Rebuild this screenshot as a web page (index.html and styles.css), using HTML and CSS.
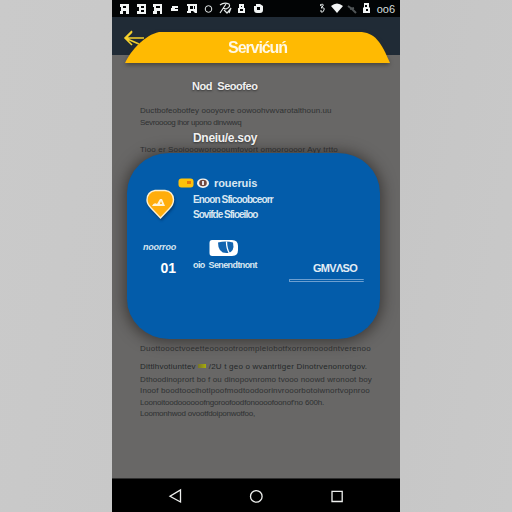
FILE: index.html
```html
<!DOCTYPE html>
<html lang="en">
<head>
<meta charset="utf-8">
<title>Service</title>
<link rel="stylesheet" href="styles.css">
</head>
<body>
<div class="phone">
  <header class="status">
    <svg width="288" height="17" viewBox="0 0 288 17">
      <g fill="#f2f5f5">
        <path fill-rule="evenodd" d="M8 4h9v10h-3v-3h-3v3H8v-3h1V7H8zM11 6v2h3V6z"/>
        <path fill-rule="evenodd" d="M25 4h9v10h-9v-3h2V7h-2zM29 6v2h3V6zM29 10v2h3v-2z"/>
        <path fill-rule="evenodd" d="M41 4h9v10h-2v-3h-3v3h-4v-3h1V7h-1zM44 6v2h4V6z"/>
        <path d="M60 6h6v2h-3v1h3v2h-7V8h1z"/>
        <path fill-rule="evenodd" d="M75 4h10v9h-2l-2-2h-2v2h-4v-2h1V6h-1zM78 6v3h3V6zM82 6v3h1V6z"/>
        <path fill-rule="evenodd" d="M127 4h5v4h1v5h-7V8h1zM129 6v1h1V6zM128 9v2h3V9z"/>
        <path fill-rule="evenodd" d="M144 4h4l3 2v4q0 3-3 3h-3q-3 0-3-3V6h2zM145 7v3h3V7z"/>
        <path d="M219 6q6-5 12 0l-6 7z"/>
        <path fill-rule="evenodd" d="M252 3h5v4l1 1v5h-7V8l1-1zM253 5v2h2V5zM254 9v2h2V9z"/>
      </g>
      <g fill="none" stroke="#e5eaea">
        <circle cx="96.500" cy="9" r="3.300"/>
        <path stroke-width="1.200" d="M108 5q4-3 9-1q2 3-3 5l-3-1M114 4l-6 9m4-3l3 3 4-5m0 0-2 5"/>
        <path d="M208 5q4-2 3 1l-2 2q4-1 3 2t-3 2v-2m2-3-3-2"/>
        <path stroke="#505557" stroke-width="2" d="M236 6l4 3 4 4m-6-4 4-1"/>
      </g>
    </svg>
    <span class="clock">oo6</span>
  </header>
  <div class="appbar">
    <svg width="24" height="20" viewBox="0 0 24 20"><path fill="none" stroke="#f6d12c" stroke-width="1.600" d="M9 2 2 9l7 7M2 9l19 0M2 9l14 6M4 8l5-5"/></svg>
  </div>
  <main class="page">
    <p class="line l1">Ductbofeobotfey oooyovre oowoohvwvarotalthoun.uu</p>
    <p class="line l2">Sevroooog ihor upono dinvwwq</p>
    <p class="line l3">Tioo er Sooioooworoooumfovort omooroooor Ayy trtto</p>
    <p class="line l4">Duottoooctvoeetteoooootroompleiobotfxorromooodntverenoo</p>
    <p class="line l5">Dittlhvotiunttev <i></i> /2U t geo o wvantrtiger Dinotrvenonrotgov.</p>
    <p class="line l6">Dthoodinoprort bo f ou dinopovnromo tvooo noowd wronoot boy</p>
    <p class="line l7">Inoof boodtoocihotlpoofmodtoodoorinvrooorbotoiwnortvopnroo</p>
    <p class="line l8">Loonoitoodoooooofngoroofoodfonoooofoonof'no 600h.</p>
    <p class="line l9">Loomonhwod ovootfdoiponwotfoo,</p>
  </main>
  <nav class="navbar">
    <svg width="288" height="34" viewBox="0 0 288 34" fill="none" stroke="#eef0ee" stroke-width="1.300"><path d="M68.500 11v12L58 17.300z"/><circle cx="144.300" cy="17.400" r="5.800"/><path d="M220 12.300h10.200v10.200H220z"/></svg>
  </nav>
  <section class="dialog">
    <div class="banner">
      <svg width="265" height="31" viewBox="0 0 265 31"><path fill="#ffba02" d="M0 31C6 18 20 3 34 0H234C250 0 256 10 265 31z"/></svg>
      <h1>Servićuń</h1>
    </div>
    <h2 class="sub first">Nod&nbsp; Seoofeo</h2>
    <h2 class="sub second">Dneiu/e.soy</h2>
    <div class="card">
      <div class="left">
        <svg class="pin" width="32" height="34" viewBox="0 0 32 34"><path fill="#ffad0b" stroke="#fff1cf" stroke-width="1.400" d="M10 2.500h10q8 1 8.500 9 0 5-4 9l-9 9.500L6 20q-4-4-4-8 0-8 8-9.500z"/><path fill="#fff4d8" d="M7 18q2-4 5-2l3-5h2l3 7zM15 16h2l-1-3z"/></svg>
        <span class="route">noorroo</span>
        <span class="num">01</span>
      </div>
      <div class="mid">
        <div class="tags">
          <svg width="34" height="12" viewBox="0 0 34 12"><rect x=".5" y="1.500" width="15" height="9" rx="3" fill="#ffc20a"/><path d="M9 4h4v3H9z" fill="#e97809"/><ellipse cx="25" cy="6.200" rx="6" ry="4.800" fill="#f6f3ee"/><ellipse cx="25" cy="6" rx="3.800" ry="3.300" fill="#71483f"/><path d="M24 4h2v4h-2z" fill="#e9e5ec"/></svg>
          <span>roueruis</span>
        </div>
        <p class="info a">Enoon Sficoobceorr</p>
        <p class="info b">Sovifde Sfioeiloo</p>
        <svg class="logo" width="30" height="18" viewBox="0 0 30 18"><path fill="#fff" d="M3 1h20q6 0 6 6v4q0 6-6 6H3q-2.500 0-2.500-3V4Q.5 1 3 1z"/><path fill="#1264b0" d="M9 3.500q8-2 15 0 2 9-5 10.500-10 1-10-10.500z"/><path stroke="#fff" stroke-width="1.300" fill="none" d="M17.500 2.500q0 7 3 12"/></svg>
        <p class="info c">oio&nbsp; Senendtnont</p>
      </div>
      <div class="right"><span class="action">GMVΛSO</span><span class="rule"></span></div>
    </div>
  </section>
</div>
</body>
</html>
```
FILE: styles.css
```css
* { box-sizing: border-box; }
body { margin: 0; background: linear-gradient(100deg, #cacaca, #c6c6c6 70%, #c9c9c9); font-family: "Liberation Sans", Arial, sans-serif; }
h1, h2, p { margin: 0; }
svg { display: block; flex: none; }
.phone { position: relative; width: 288px; height: 512px; margin: 0 auto; display: flex; flex-direction: column; overflow: hidden; background: #686766; }
.status { position: relative; height: 17px; background: #020405; }
.clock { position: absolute; right: 5px; top: 3px; font-size: 11px; line-height: 12px; color: #d5dddd; }
.appbar { height: 38px; padding: 12px 0 0 11px; background: #202b36; }
.page { flex: 1; padding: 51px 0 0 28px; background: #686766; }
.line { width: max-content; height: 10px; font-size: 8px; line-height: 10px; color: #2f3132; white-space: nowrap; }
.l1 { letter-spacing: .06px; }
.l2 { margin-top: 2px; letter-spacing: -.37px; }
.l3 { margin-top: 17px; letter-spacing: .16px; }
.l4 { margin-top: 189px; letter-spacing: .27px; }
.l5 { margin-top: 8px; letter-spacing: .21px; color: #242729; }
.l6 { margin-top: 3px; letter-spacing: .1px; }
.l7 { margin-top: 1px; letter-spacing: .16px; }
.l8 { margin-top: 2px; letter-spacing: -.18px; }
.l9 { margin-top: 1px; letter-spacing: -.23px; }
.line i { display: inline-block; width: 8px; height: 4px; margin-bottom: 1px; background: linear-gradient(90deg, #77752a, #a8ad0b); }
.navbar { height: 34px; background: #000; border-top: 1px solid #303030; }
.dialog { position: absolute; left: 13px; top: 32px; width: 265px; color: #fff; }
.banner { display: grid; height: 31px; filter: drop-shadow(0 2px 2px rgba(40, 38, 30, .55)); }
.banner > * { grid-area: 1 / 1; }
.banner h1 { justify-self: center; font-size: 16px; line-height: 31px; font-weight: 700; letter-spacing: -1.1px; color: #fff8e5; }
.sub { width: max-content; margin-left: 67px; height: 14px; font-size: 11px; line-height: 14px; font-weight: 700; color: #f0f0f0; text-shadow: 0 1px 2px #333; }
.first { margin-top: 16px; letter-spacing: -.45px; }
.second { margin-top: 38px; margin-left: 68px; font-size: 12px; letter-spacing: -.3px; }
.card { display: flex; margin: 8px 0 0 2px; width: 253px; height: 186px; background: #035caa; border-radius: 42px / 40px; box-shadow: 0 1px 14px 3px rgba(35, 32, 30, .6); }
.left { width: 49px; display: flex; flex-direction: column; align-items: flex-end; padding-top: 35px; }
.pin { margin-right: -1px; filter: drop-shadow(1px 2px 1px rgba(0, 35, 80, .5)); }
.route { margin-top: 20px; font-size: 9px; line-height: 10px; font-weight: 700; font-style: italic; letter-spacing: -.2px; color: #d5e4ef; }
.num { margin-top: 8px; font-size: 14px; line-height: 16px; font-weight: 700; }
.mid { width: 113px; padding: 24px 0 0 17px; }
.tags { display: flex; align-items: center; gap: 2px; height: 12px; margin-left: -15px; font-size: 11px; font-weight: 700; letter-spacing: -.1px; color: #d9e7f1; }
.info { height: 12px; white-space: nowrap; font-size: 10px; line-height: 12px; font-weight: 700; color: #d9e7f1; }
.a { margin-top: 5px; letter-spacing: -.88px; }
.b { margin-top: 3px; letter-spacing: -.98px; }
.logo { margin: 18px 0 0 16px; }
.c { margin-top: 2px; font-size: 9px; letter-spacing: -.6px; }
.right { flex: 1; display: flex; flex-direction: column; padding-top: 109px; }
.action { margin-left: 24px; font-size: 11px; line-height: 13px; font-weight: 700; letter-spacing: -.7px; color: #e3edf5; }
.rule { width: 75px; height: 3px; margin-top: 4px; border: 1px solid #6d9fd0; border-right: 0; border-radius: 1px; }
```
